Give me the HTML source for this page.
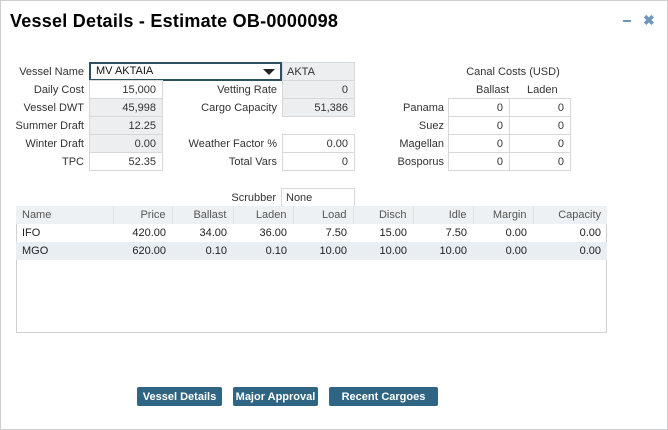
<!DOCTYPE html>
<html><head><style>
*{box-sizing:border-box;margin:0;padding:0}
body{width:668px;height:430px;background:#fff;font-family:"Liberation Sans",Arial,sans-serif;font-size:11px;color:#333;position:relative;overflow:hidden}
.frame{position:absolute;left:0;top:0;width:668px;height:430px;border:1px solid #ccd0d3}
.a{position:absolute}
.l{position:absolute;text-align:right;line-height:18px;padding-top:1px}
.in{position:absolute;height:19px;border:1px solid #d5d9dc;text-align:right;padding-right:6px;line-height:18px;background:#fff}
.g{background:#eceeef}
h1{position:absolute;left:10px;top:11px;font-size:18px;font-weight:bold;color:#000;letter-spacing:0.25px}
table{position:absolute;left:16px;top:206px;width:591px;border-collapse:collapse}
.tb{position:absolute;left:16px;top:206px;width:591px;height:127px;border:1px solid #cdd1d4}
th{font-weight:normal;height:18px;background:#eef1f3;border-right:1px solid #dfe2e4;text-align:right;padding:0 6px;color:#555}
td{height:18px;text-align:right;padding:0 6px;color:#222}
.btn{position:absolute;top:387px;height:19px;background:#2f6482;color:#fff;font-weight:bold;font-size:11px;text-align:center;line-height:20px;border-radius:2px}
</style></head><body>
<div class="frame"></div>
<h1>Vessel Details - Estimate OB-0000098</h1>
<div class="a" style="left:623px;top:20px;width:8px;height:2px;background:#6b96bd"></div>
<div class="a" style="left:643px;top:12px;color:#6b96bd;font-size:14px;font-weight:bold">✖</div>

<div class="l" style="left:0;width:84px;top:62px">Vessel Name</div>
<div class="a" style="left:89px;top:62px;width:193px;height:19px;border:2px solid #2f4f62;padding-left:5px;line-height:15px;color:#111">MV AKTAIA<span style="position:absolute;right:5px;top:5px;width:0;height:0;border-left:6px solid transparent;border-right:6px solid transparent;border-top:6px solid #222"></span></div>
<div class="in g" style="left:282px;top:62px;width:73px;text-align:left;padding-left:4px">AKTA</div>

<div class="l" style="left:0;width:84px;top:80px">Daily Cost</div>
<div class="l" style="left:0;width:84px;top:98px">Vessel DWT</div>
<div class="l" style="left:0;width:84px;top:116px">Summer Draft</div>
<div class="l" style="left:0;width:84px;top:134px">Winter Draft</div>
<div class="l" style="left:0;width:84px;top:152px">TPC</div>
<div class="in" style="left:89px;top:80px;width:74px">15,000</div>
<div class="in g" style="left:89px;top:98px;width:74px">45,998</div>
<div class="in g" style="left:89px;top:116px;width:74px">12.25</div>
<div class="in g" style="left:89px;top:134px;width:74px">0.00</div>
<div class="in" style="left:89px;top:152px;width:74px">52.35</div>

<div class="l" style="left:160px;width:117px;top:80px">Vetting Rate</div>
<div class="l" style="left:160px;width:117px;top:98px">Cargo Capacity</div>
<div class="l" style="left:160px;width:117px;top:134px">Weather Factor %</div>
<div class="l" style="left:160px;width:117px;top:152px">Total Vars</div>
<div class="in g" style="left:282px;top:80px;width:73px">0</div>
<div class="in g" style="left:282px;top:98px;width:73px">51,386</div>
<div class="in" style="left:282px;top:134px;width:73px">0.00</div>
<div class="in" style="left:282px;top:152px;width:73px">0</div>

<div class="a" style="left:440px;width:146px;top:66px;text-align:center">Canal Costs (USD)</div>
<div class="a" style="left:476px;top:84px">Ballast</div>
<div class="a" style="left:527px;top:84px">Laden</div>
<div class="l" style="left:380px;width:64px;top:98px">Panama</div>
<div class="l" style="left:380px;width:64px;top:116px">Suez</div>
<div class="l" style="left:380px;width:64px;top:134px">Magellan</div>
<div class="l" style="left:380px;width:64px;top:152px">Bosporus</div>
<div class="in" style="left:448px;top:98px;width:62px">0</div><div class="in" style="left:509px;top:98px;width:62px">0</div>
<div class="in" style="left:448px;top:116px;width:62px">0</div><div class="in" style="left:509px;top:116px;width:62px">0</div>
<div class="in" style="left:448px;top:134px;width:62px">0</div><div class="in" style="left:509px;top:134px;width:62px">0</div>
<div class="in" style="left:448px;top:152px;width:62px">0</div><div class="in" style="left:509px;top:152px;width:62px">0</div>

<div class="l" style="left:200px;width:76px;top:188px">Scrubber</div>
<div class="in" style="left:281px;top:188px;width:74px;text-align:left;padding-left:4px">None</div>

<div class="tb"></div>
<table>
<tr><th style="text-align:left;width:97px">Name</th><th style="width:59px">Price</th><th style="width:61px">Ballast</th><th style="width:60px">Laden</th><th style="width:60px">Load</th><th style="width:60px">Disch</th><th style="width:60px">Idle</th><th style="width:60px">Margin</th><th style="border-right:none">Capacity</th></tr>
<tr><td style="text-align:left">IFO</td><td>420.00</td><td>34.00</td><td>36.00</td><td>7.50</td><td>15.00</td><td>7.50</td><td>0.00</td><td>0.00</td></tr>
<tr style="background:#e8eef2"><td style="text-align:left">MGO</td><td>620.00</td><td>0.10</td><td>0.10</td><td>10.00</td><td>10.00</td><td>10.00</td><td>0.00</td><td>0.00</td></tr>
</table>

<div class="btn" style="left:137px;width:85px">Vessel Details</div>
<div class="btn" style="left:233px;width:85px">Major Approval</div>
<div class="btn" style="left:329px;width:109px">Recent Cargoes</div>
</body></html>
